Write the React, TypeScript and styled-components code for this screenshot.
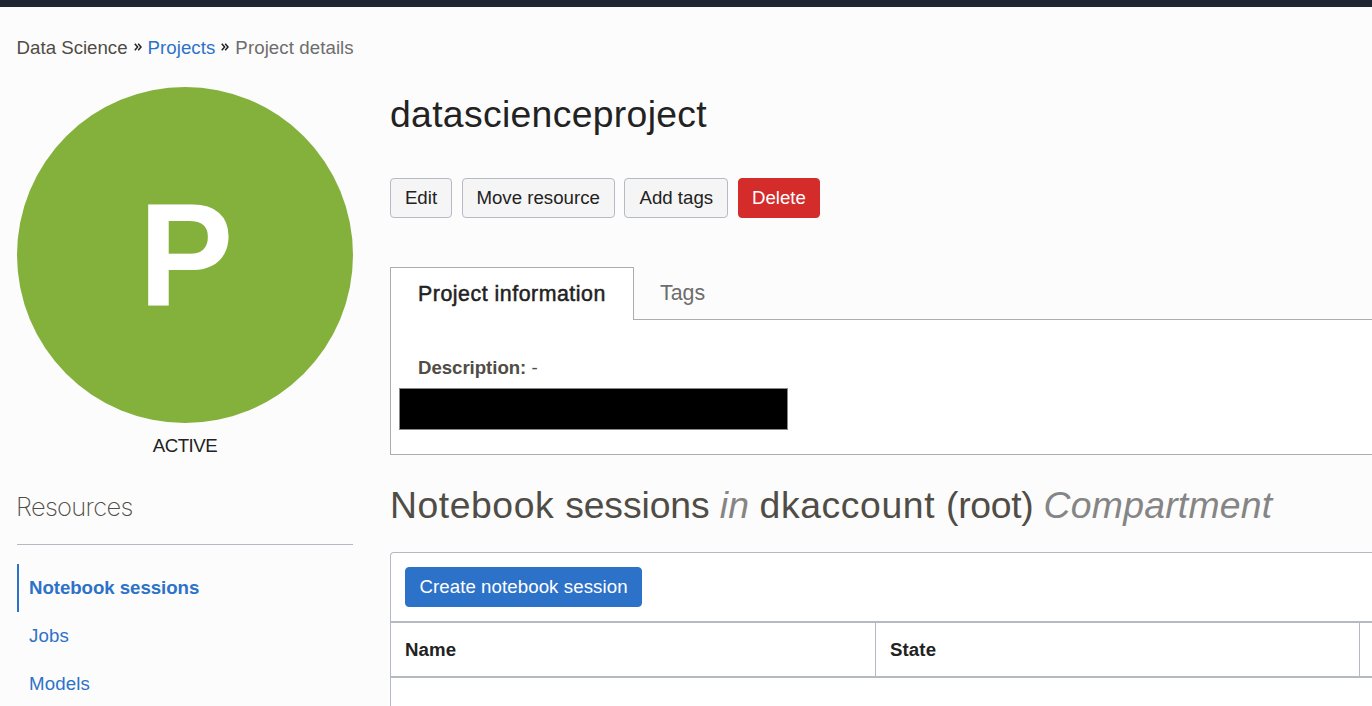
import React from "react";
import styled, { createGlobalStyle } from "styled-components";

const GlobalStyle = createGlobalStyle`
  *, *::before, *::after { box-sizing: border-box; }
  html, body { margin: 0; height: 100%; overflow: hidden; }
  body {
    background: #fcfcfc;
    color: #222;
    font-family: "Liberation Sans", Arial, sans-serif;
    font-size: 18.67px;
  }
  #root { height: 100%; }
`;

const Page = styled.div`
  height: 706px;
  overflow: hidden;
  display: flex;
  flex-direction: column;
`;

const TopBar = styled.header`
  flex: 0 0 7px;
  background: #202631;
`;

const Breadcrumbs = styled.nav`
  flex: 0 0 80px;
  display: flex;
  align-items: center;
  padding: 1px 0 0 16.6px;
`;

const Crumb = styled.span<{ $color: string; $spacing?: number }>`
  color: ${(p) => p.$color};
  letter-spacing: ${(p) => p.$spacing ?? 0}px;
  white-space: nowrap;
`;

const Chevrons = styled.svg`
  width: 8px;
  height: 8px;
  margin: 0 6px 2px;
  fill: none;
  stroke: #222;
  stroke-width: 1.5;
`;

const Body = styled.div`
  flex: 1;
  display: flex;
  gap: 37px;
  padding-left: 17px;
`;

const Sidebar = styled.aside`
  flex: 0 0 336px;
`;

const Avatar = styled.div`
  display: flex;
  align-items: center;
  justify-content: center;
  width: 336px;
  height: 336px;
  border-radius: 50%;
  background: #84b03c;
`;

const AvatarLetter = styled.span`
  color: #fff;
  font-size: 147px;
  font-weight: 700;
  line-height: 336px;
  padding-left: 3px;
  transform: scaleX(0.965);
`;

const Status = styled.div`
  margin-top: 11px;
  line-height: 24px;
  text-align: center;
  letter-spacing: -0.5px;
`;

const ResourcesTitle = styled.h3`
  margin: 22px 0 0;
  height: 65px;
  padding-top: 11px;
  border-bottom: 1px solid #b4b9c2;
  color: #504c46;
  font-family: Inter, "Liberation Sans", sans-serif;
  font-size: 25.5px;
  font-weight: 200;
  line-height: 32px;
  letter-spacing: -0.7px;
  text-indent: -1px;
`;

const ResourceList = styled.ul`
  list-style: none;
  margin: 19px 0 0;
  padding: 0;
`;

const ResourceItem = styled.li<{ $active?: boolean }>`
  height: 48px;
  line-height: 48px;
  padding-left: 10px;
  border-left: 2px solid ${(p) => (p.$active ? "#2d72c9" : "transparent")};
  color: #2d72c9;
  font-weight: ${(p) => (p.$active ? 700 : 400)};
  letter-spacing: ${(p) => (p.$active ? -0.05 : 0.15)}px;
`;

const Main = styled.main`
  flex: 1;
  min-width: 0;
`;

const Title = styled.h1`
  margin: 5px 0 0;
  font-size: 37.33px;
  font-weight: 400;
  line-height: 44px;
  letter-spacing: 0.32px;
`;

const Actions = styled.div`
  display: flex;
  gap: 9.67px;
  margin-top: 42px;
`;

type Variant = "plain" | "danger" | "primary";
const fills: Record<Variant, string> = { plain: "#f5f5f5", danger: "#d42b2b", primary: "#2d72c9" };

const Button = styled.button<{ $variant?: Variant; $width: number; $spacing?: number }>`
  width: ${(p) => p.$width}px;
  height: 40px;
  margin: 0;
  padding: 0;
  border: 1px solid ${(p) => (!p.$variant || p.$variant === "plain" ? "#b6bbc3" : fills[p.$variant])};
  border-radius: 4px;
  background: ${(p) => fills[p.$variant ?? "plain"]};
  color: ${(p) => (!p.$variant || p.$variant === "plain" ? "#222" : "#fff")};
  font: inherit;
  letter-spacing: ${(p) => p.$spacing ?? 0}px;
  white-space: nowrap;
`;

const Tabs = styled.div`
  display: flex;
  height: 53px;
  margin-top: 49px;
  font-size: 21.33px;
`;

const ActiveTab = styled.div`
  width: 244px;
  padding-left: 27px;
  border: 1px solid #adadad;
  border-bottom: 0;
  background: #fff;
  line-height: 52px;
  letter-spacing: 0.53px;
  -webkit-text-stroke: 0.5px #222;
  white-space: nowrap;
`;

const Tab = styled.div`
  flex: 1;
  padding-left: 26px;
  border-bottom: 1px solid #adadad;
  color: #6d6d6d;
  line-height: 53px;
`;

const InfoPanel = styled.section`
  height: 135px;
  padding: 36px 0 0 9px;
  border: 1px solid #adadad;
  border-width: 0 0 1px 1px;
  background: #fff;
`;

const Description = styled.div`
  padding-left: 18px;
  line-height: 24px;
  color: #504c46;
`;

const DescriptionLabel = styled.strong`
  letter-spacing: -0.05px;
`;

const Redaction = styled.div`
  width: 389px;
  height: 42px;
  margin: 8px 0 0 -1px;
  border: 1px solid #888;
  background: #000;
`;

const SectionTitle = styled.h2`
  display: flex;
  margin: 28px 0 0;
  color: #504c46;
  font-size: 37.33px;
  font-weight: 400;
  line-height: 44px;
  white-space: pre;
`;

const TitleWord = styled.span<{ $spacing: number; $muted?: boolean }>`
  letter-spacing: ${(p) => p.$spacing}px;
  color: ${(p) => (p.$muted ? "#858585" : "inherit")};
  font-style: ${(p) => (p.$muted ? "italic" : "normal")};
`;

const TablePanel = styled.section`
  margin-top: 25px;
  height: 160px;
  border: 1px solid #b4b9c2;
  border-width: 1px 0 0 1px;
  border-top-left-radius: 4px;
  background: #fff;
`;

const Toolbar = styled.div`
  height: 68px;
  padding: 14px;
`;

const TableHead = styled.div`
  display: grid;
  grid-template-columns: 485px 484px 1fr;
  height: 57px;
  border: solid #b4b9c2;
  border-width: 2px 0;
`;

const HeadCell = styled.div`
  padding-left: 14px;
  border-right: 1px solid #b4b9c2;
  font-weight: 700;
  line-height: 53px;
  letter-spacing: 0.1px;
  &:last-child { border-right: 0; }
`;

function Separator() {
  return (
    <Chevrons viewBox="0 0 8 8" aria-hidden="true">
      <path d="M0.8 0.7 L3.6 4 L0.8 7.3 M4.2 0.7 L7 4 L4.2 7.3" />
    </Chevrons>
  );
}

export default function App() {
  return (
    <>
      <GlobalStyle />
      <Page>
        <TopBar />
        <Breadcrumbs>
          <Crumb $color="#504c46">Data Science</Crumb>
          <Separator />
          <Crumb $color="#2d72c9" $spacing={0.05}>Projects</Crumb>
          <Separator />
          <Crumb $color="#6d6d6d" $spacing={0.08}>Project details</Crumb>
        </Breadcrumbs>
        <Body>
          <Sidebar>
            <Avatar><AvatarLetter>P</AvatarLetter></Avatar>
            <Status>ACTIVE</Status>
            <ResourcesTitle>Resources</ResourcesTitle>
            <ResourceList>
              <ResourceItem $active>Notebook sessions</ResourceItem>
              <ResourceItem>Jobs</ResourceItem>
              <ResourceItem>Models</ResourceItem>
            </ResourceList>
          </Sidebar>
          <Main>
            <Title>datascienceproject</Title>
            <Actions>
              <Button $width={62}>Edit</Button>
              <Button $width={153}>Move resource</Button>
              <Button $width={104}>Add tags</Button>
              <Button $width={82} $variant="danger">Delete</Button>
            </Actions>
            <Tabs>
              <ActiveTab>Project information</ActiveTab>
              <Tab>Tags</Tab>
            </Tabs>
            <InfoPanel>
              <Description>
                <DescriptionLabel>Description:</DescriptionLabel> -
              </Description>
              <Redaction />
            </InfoPanel>
            <SectionTitle>
              <TitleWord $spacing={0.55}>{"Notebook "}</TitleWord>
              <TitleWord $spacing={-0.1}>{"sessions "}</TitleWord>
              <TitleWord $spacing={0.1} $muted>{"in "}</TitleWord>
              <TitleWord $spacing={0.6}>{"dkaccount "}</TitleWord>
              <TitleWord $spacing={-0.3}>{"(root) "}</TitleWord>
              <TitleWord $spacing={0.25} $muted>Compartment</TitleWord>
            </SectionTitle>
            <TablePanel>
              <Toolbar>
                <Button $width={237} $variant="primary" $spacing={0.08}>Create notebook session</Button>
              </Toolbar>
              <TableHead>
                <HeadCell>Name</HeadCell>
                <HeadCell>State</HeadCell>
                <HeadCell />
              </TableHead>
            </TablePanel>
          </Main>
        </Body>
      </Page>
    </>
  );
}
